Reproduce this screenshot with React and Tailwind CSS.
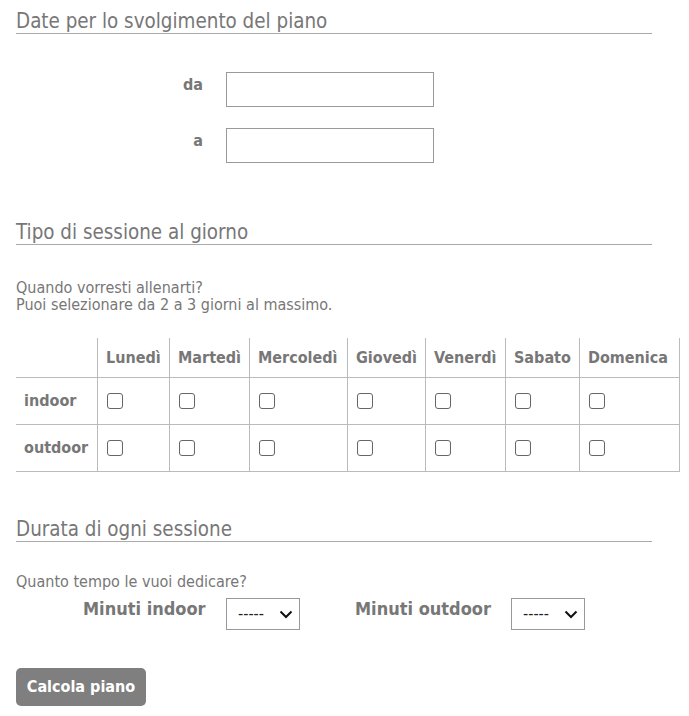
import React from "react";

const days = ["Lunedì", "Martedì", "Mercoledì", "Giovedì", "Venerdì", "Sabato", "Domenica"];

function Heading({ children, className = "" }) {
  return (
    <h2 className={`text-[20.4px] leading-6 font-normal text-[#777] border-b border-[#aaa] ${className}`}>
      {children}
    </h2>
  );
}

function Check() {
  return (
    <input
      type="checkbox"
      className="appearance-none w-4 h-4 ml-px border border-[#666] rounded-[3px] bg-white block"
    />
  );
}

function Select() {
  return (
    <div className="relative w-[74px] h-8">
      <select className="appearance-none w-full h-full border border-[#999] bg-white pl-[11px] text-[16px] text-[#222] outline-none">
        <option>-----</option>
      </select>
      <svg
        className="absolute right-[7px] top-[12px] pointer-events-none"
        width="14"
        height="9"
        viewBox="0 0 14 9"
        fill="none"
      >
        <path d="M1.5 1.5 L7 7 L12.5 1.5" stroke="#111" strokeWidth="2" />
      </svg>
    </div>
  );
}

export default function App() {
  const cell = "border-b border-[#bbb] px-2 flex items-center";
  return (
    <div className="font-['DejaVu_Sans_Condensed','DejaVu_Sans',sans-serif] text-[#777] bg-white min-h-[716px] pl-4">
      <div className="w-[636px] pt-[9px]">
        <Heading>Date per lo svolgimento del piano</Heading>

        <div className="mt-[38px] flex flex-col gap-[21px]">
          <div className="flex items-start">
            <span className="w-[187px] text-right font-bold text-[16px] leading-6 mt-px">da</span>
            <input type="text" className="ml-[23px] w-[208px] h-[35px] border border-[#999] bg-white outline-none" />
          </div>
          <div className="flex items-start">
            <span className="w-[187px] text-right font-bold text-[16px] leading-6 mt-px">a</span>
            <input type="text" className="ml-[23px] w-[208px] h-[35px] border border-[#999] bg-white outline-none" />
          </div>
        </div>

        <Heading className="mt-[57px]">Tipo di sessione al giorno</Heading>

        <div className="mt-[34px] text-[16px] leading-[17px]">
          <p>Quando vorresti allenarti?</p>
          <p>Puoi selezionare da 2 a 3 giorni al massimo.</p>
        </div>
      </div>

      <div className="mt-[25px] grid grid-cols-[81px_72px_80px_98px_78px_80px_74px_101px] w-[663px] text-[16px] font-bold leading-5">
        <div className={`${cell} h-10`} />
        {days.map((d, i) => (
          <div
            key={d}
            className={`${cell} h-10 border-l ${i === days.length - 1 ? "border-r" : ""}`}
          >
            {d}
          </div>
        ))}
        {["indoor", "outdoor"].map((r) => (
          <React.Fragment key={r}>
            <div className={`${cell} h-[47px]`}>{r}</div>
            {days.map((d, i) => (
              <div
                key={d}
                className={`${cell} h-[47px] border-l ${i === days.length - 1 ? "border-r" : ""}`}
              >
                <Check />
              </div>
            ))}
          </React.Fragment>
        ))}
      </div>

      <div className="w-[636px]">
        <Heading className="mt-[45px]">Durata di ogni sessione</Heading>

        <p className="mt-[31px] text-[16px] leading-[17px]">Quanto tempo le vuoi dedicare?</p>

        <div className="mt-2 flex items-start">
          <span className="ml-[67px] w-[121px] whitespace-nowrap font-bold text-[18px] leading-[22px]">Minuti indoor</span>
          <div className="ml-[22px]">
            <Select />
          </div>
          <span className="ml-[55px] w-[134px] whitespace-nowrap font-bold text-[18px] leading-[22px]">Minuti outdoor</span>
          <div className="ml-[22px]">
            <Select />
          </div>
        </div>

        <button className="mt-[38px] w-[130px] h-[38px] rounded-[5px] bg-[#7f7f7f] text-white font-bold text-[16px] flex items-center justify-center">
          Calcola piano
        </button>
      </div>
    </div>
  );
}
